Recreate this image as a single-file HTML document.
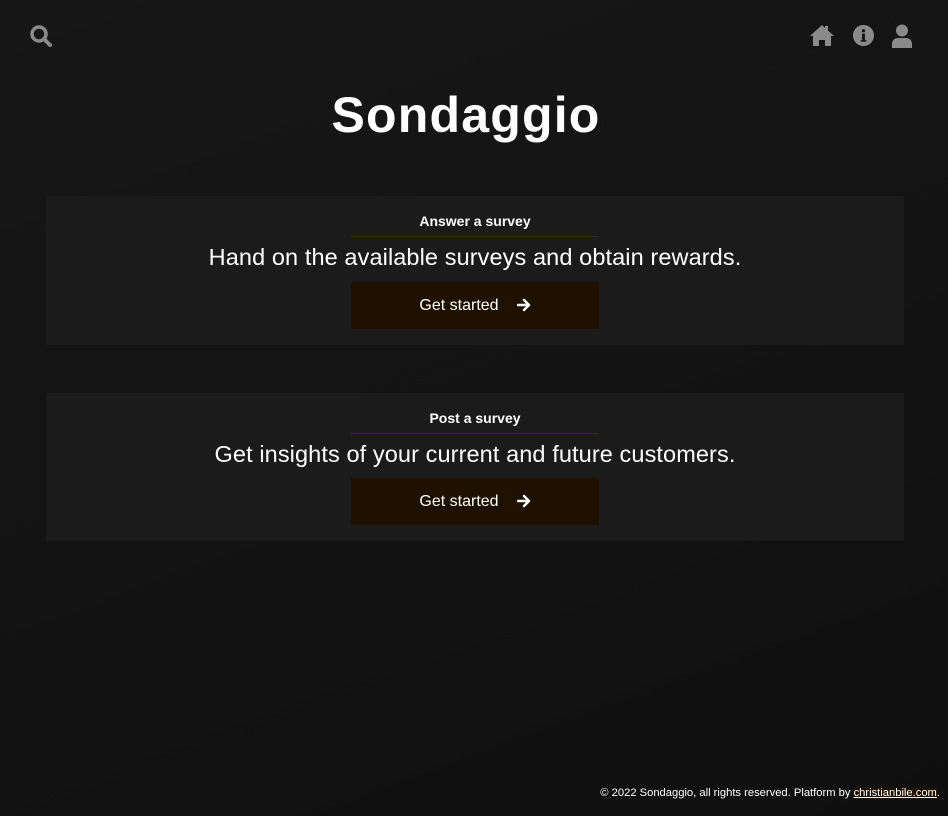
<!DOCTYPE html>
<html><head><style>
body{margin:0;width:948px;height:816px;background:linear-gradient(160deg,#171717,#0f0f0f);font-family:"Liberation Sans",sans-serif;color:#fff;position:relative;overflow:hidden}
.ic{position:absolute;fill:#8a8a8a}
h1{position:absolute;top:86px;left:-8px;width:948px;text-align:center;margin:0;font-size:50px;font-weight:bold;letter-spacing:1.2px}
.card{position:absolute;left:46px;width:858px;height:149px;background:#1b1b1b;text-align:center}
.t{position:absolute;top:17px;width:100%;font-size:14px;font-weight:bold}
.line{position:absolute;left:305px;top:40px;width:248px;height:1px;background:#3a2a10}
.s{position:absolute;top:48px;width:100%;font-size:23.5px;letter-spacing:0.1px}
.b{position:absolute;left:305px;top:86px;width:248px;height:47px;background:#1e1100;font-size:16px;line-height:47px}
.b svg{vertical-align:-2px;margin-left:18px}
.foot{position:absolute;right:8px;top:787px;font-size:11.2px}
.foot u{background:#1e1100}
</style></head><body>
<svg class="ic" style="left:29px;top:24px" width="24" height="24" viewBox="0 0 24 24"><circle cx="10" cy="10" r="7" fill="none" stroke="#8a8a8a" stroke-width="3.5"/><path d="M15 15l6 6" stroke="#8a8a8a" stroke-width="4" stroke-linecap="round"/></svg>
<svg class="ic" style="left:809px;top:24px" width="26" height="22" viewBox="0 0 26 22"><path d="M13 1L1 12h3v10h6v-6h6v6h6V12h3L19 6.5V2h-3v2z"/></svg>
<svg class="ic" style="left:852px;top:24px" width="23" height="23" viewBox="0 0 24 24"><circle cx="12" cy="12" r="11"/><rect x="10.5" y="10" width="3" height="8" fill="#141414"/><rect x="9" y="17" width="6" height="1.5" fill="#141414"/><circle cx="12" cy="7" r="1.7" fill="#141414"/></svg>
<svg class="ic" style="left:891px;top:24px" width="22" height="24" viewBox="0 0 22 24"><circle cx="11" cy="6.5" r="6"/><path d="M1 24v-4c0-4 3-6 6-6h8c3 0 6 2 6 6v4z"/></svg>
<h1>Sondaggio</h1>
<div class="card" style="top:196px"><div class="t">Answer a survey</div><div class="line"></div><div class="s">Hand on the available surveys and obtain rewards.</div><div class="b">Get started<svg width="14" height="14" viewBox="0 0 14 14"><path d="M1 7h11M7 2l5 5-5 5" stroke="#fff" stroke-width="2.4" fill="none" stroke-linecap="round" stroke-linejoin="round"/></svg></div></div>
<div class="card" style="top:393px;height:148px"><div class="t">Post a survey</div><div class="line"></div><div class="s">Get insights of your current and future customers.</div><div class="b" style="top:85px">Get started<svg width="14" height="14" viewBox="0 0 14 14"><path d="M1 7h11M7 2l5 5-5 5" stroke="#fff" stroke-width="2.4" fill="none" stroke-linecap="round" stroke-linejoin="round"/></svg></div></div>
<div class="foot">© 2022 Sondaggio, all rights reserved. Platform by <u>christianbile.com</u>.</div>
</body></html>
